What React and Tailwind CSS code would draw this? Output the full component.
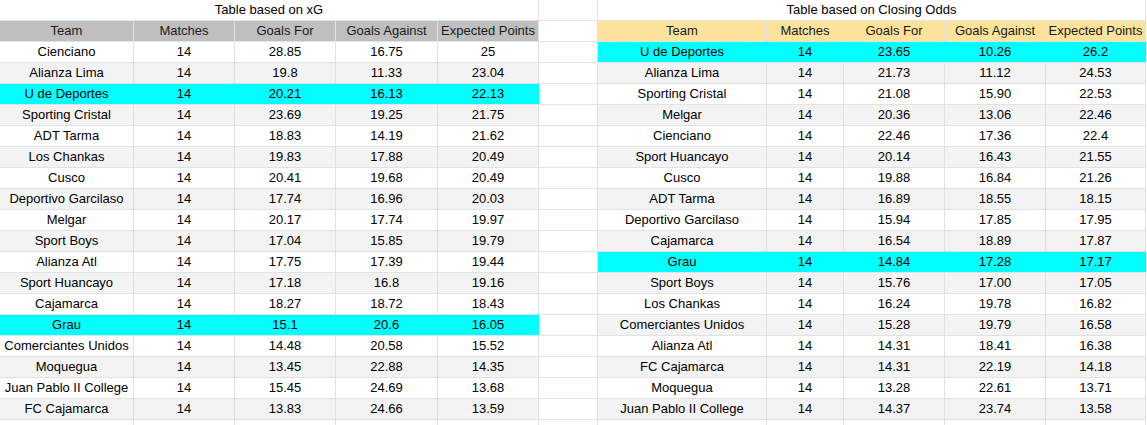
const HEADERS = ['Team', 'Matches', 'Goals For', 'Goals Against', 'Expected Points']

const XG_ROWS = [
  ['Cienciano', 14, '28.85', '16.75', '25'],
  ['Alianza Lima', 14, '19.8', '11.33', '23.04'],
  ['U de Deportes', 14, '20.21', '16.13', '22.13', true],
  ['Sporting Cristal', 14, '23.69', '19.25', '21.75'],
  ['ADT Tarma', 14, '18.83', '14.19', '21.62'],
  ['Los Chankas', 14, '19.83', '17.88', '20.49'],
  ['Cusco', 14, '20.41', '19.68', '20.49'],
  ['Deportivo Garcilaso', 14, '17.74', '16.96', '20.03'],
  ['Melgar', 14, '20.17', '17.74', '19.97'],
  ['Sport Boys', 14, '17.04', '15.85', '19.79'],
  ['Alianza Atl', 14, '17.75', '17.39', '19.44'],
  ['Sport Huancayo', 14, '17.18', '16.8', '19.16'],
  ['Cajamarca', 14, '18.27', '18.72', '18.43'],
  ['Grau', 14, '15.1', '20.6', '16.05', true],
  ['Comerciantes Unidos', 14, '14.48', '20.58', '15.52'],
  ['Moquegua', 14, '13.45', '22.88', '14.35'],
  ['Juan Pablo II College', 14, '15.45', '24.69', '13.68'],
  ['FC Cajamarca', 14, '13.83', '24.66', '13.59'],
]

const ODDS_ROWS = [
  ['U de Deportes', 14, '23.65', '10.26', '26.2', true],
  ['Alianza Lima', 14, '21.73', '11.12', '24.53'],
  ['Sporting Cristal', 14, '21.08', '15.90', '22.53'],
  ['Melgar', 14, '20.36', '13.06', '22.46'],
  ['Cienciano', 14, '22.46', '17.36', '22.4'],
  ['Sport Huancayo', 14, '20.14', '16.43', '21.55'],
  ['Cusco', 14, '19.88', '16.84', '21.26'],
  ['ADT Tarma', 14, '16.89', '18.55', '18.15'],
  ['Deportivo Garcilaso', 14, '15.94', '17.85', '17.95'],
  ['Cajamarca', 14, '16.54', '18.89', '17.87'],
  ['Grau', 14, '14.84', '17.28', '17.17', true],
  ['Sport Boys', 14, '15.76', '17.00', '17.05'],
  ['Los Chankas', 14, '16.24', '19.78', '16.82'],
  ['Comerciantes Unidos', 14, '15.28', '19.79', '16.58'],
  ['Alianza Atl', 14, '14.31', '18.41', '16.38'],
  ['FC Cajamarca', 14, '14.31', '22.19', '14.18'],
  ['Moquegua', 14, '13.28', '22.61', '13.71'],
  ['Juan Pablo II College', 14, '14.37', '23.74', '13.58'],
]

function Cell({ children, bg }) {
  return (
    <div className={`h-[21px] border-t border-r border-[#e2e2e2] text-center leading-[20px] whitespace-nowrap overflow-hidden ${bg}`}>
      {children}
    </div>
  )
}

function SheetTable({ title, rows, cols, headerBg }) {
  return (
    <div className="flex flex-col">
      <div className="h-[20px] border-r border-[#e2e2e2] text-center leading-[20px]">{title}</div>
      <div className={`grid ${cols}`}>
        {HEADERS.map(h => (
          <Cell key={h} bg={`${headerBg} text-[#1a1a1a]`}>{h}</Cell>
        ))}
        {rows.map((r, i) => {
          const bg = r[5] ? 'bg-[#00ffff] border-r-transparent' : i % 2 === 1 ? 'bg-[#f3f3f3]' : 'bg-white'
          return r.slice(0, 5).map((v, j) => <Cell key={`${i}-${j}`} bg={bg}>{v}</Cell>)
        })}
        {HEADERS.map(h => <div key={`end-${h}`} className="h-[6px] border-t border-r border-[#e2e2e2]" />)}
      </div>
    </div>
  )
}

export default function App() {
  return (
    <div
      className="w-[1147px] h-[425px] overflow-hidden bg-white text-[13px] text-black flex"
      style={{ fontFamily: '"Liberation Sans", Arial, sans-serif' }}
    >
      <SheetTable
        title="Table based on xG"
        rows={XG_ROWS}
        cols="grid-cols-[134px_101px_101px_102px_101px]"
        headerBg="bg-[#bfbfbf]"
      />

      {/* empty spacer column between the two tables */}
      <div className="w-[59px] flex flex-col">
        <div className="h-[20px] border-r border-[#e2e2e2]" />
        {Array.from({ length: 19 }).map((_, i) => (
          <div key={i} className="h-[21px] border-t border-r border-[#e2e2e2]" />
        ))}
        <div className="h-[6px] border-t border-r border-[#e2e2e2]" />
      </div>

      <SheetTable
        title="Table based on Closing Odds"
        rows={ODDS_ROWS}
        cols="grid-cols-[169px_77px_101px_101px_100px]"
        headerBg="bg-[#fde29c]"
      />
    </div>
  )
}
